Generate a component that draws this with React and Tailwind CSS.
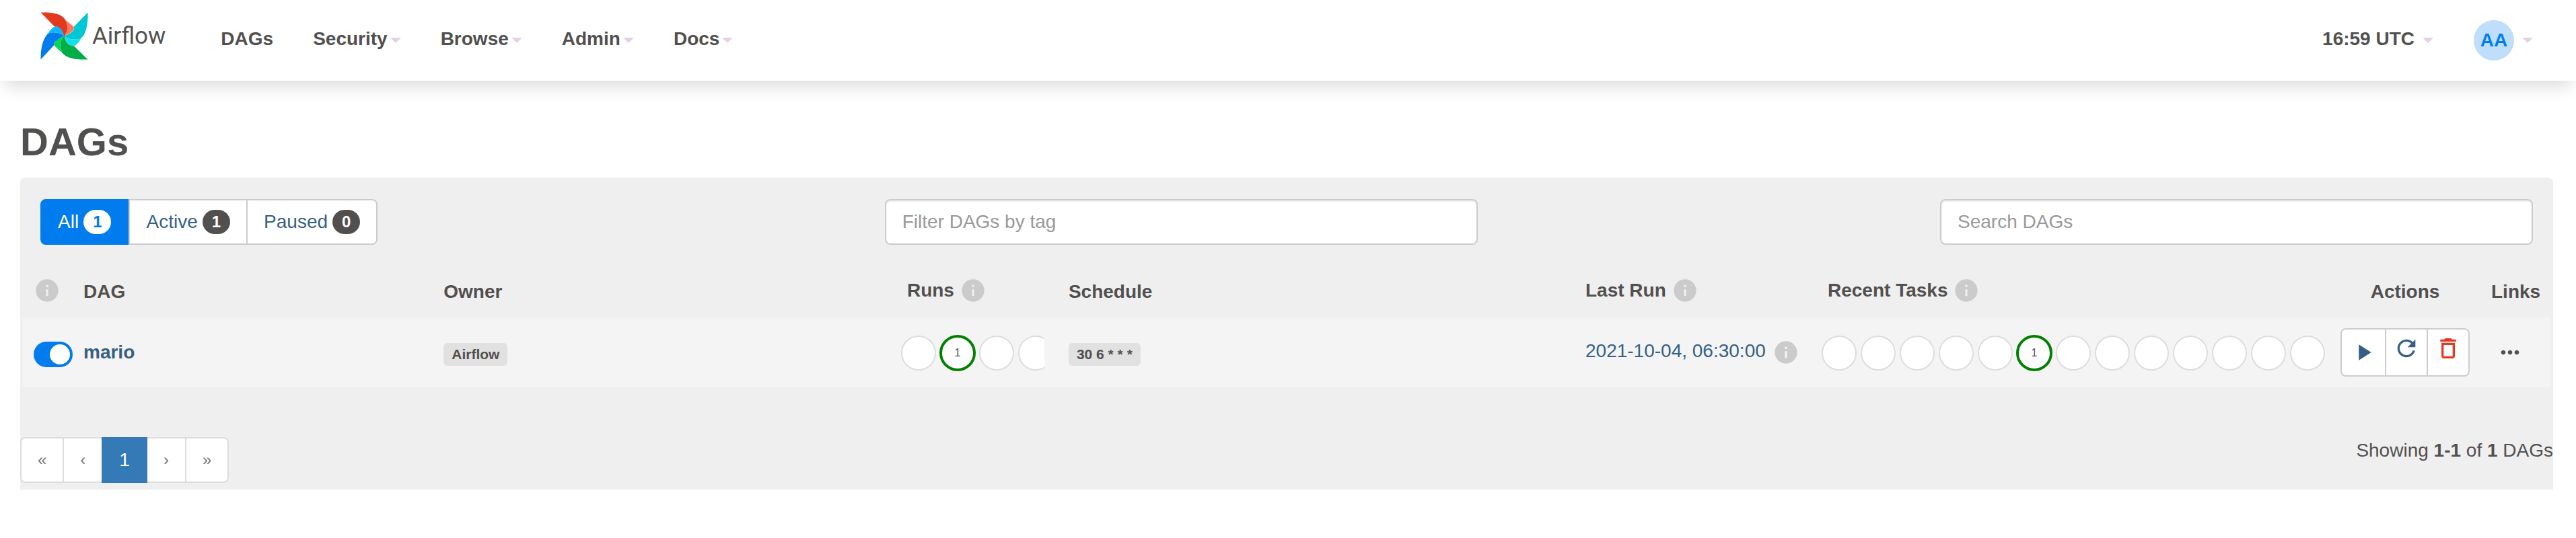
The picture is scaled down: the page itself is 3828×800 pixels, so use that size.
import { MdInfo, MdPlayArrow, MdRefresh, MdDeleteOutline, MdMoreHoriz } from 'react-icons/md';

const NAV = [
  { label: 'DAGs', menu: false },
  { label: 'Security', menu: true },
  { label: 'Browse', menu: true },
  { label: 'Admin', menu: true },
  { label: 'Docs', menu: true },
];

function Caret() {
  return (
    <span
      aria-hidden="true"
      className="mt-1 h-0 w-0 border-x-8 border-t-8 border-x-transparent border-t-[#e2d2e2]"
    />
  );
}

function Pinwheel() {
  return (
    <svg viewBox="0 0 71 71" className="h-[71px] w-[71px]" aria-hidden="true">
      <path d="M35.5 35.5C29 30 19 29 11 32C3 41 0.500 54 0.500 70.500L20.500 49C20 44 28 39 35.500 35.500Z" fill="#017cee" />
      <path d="M35.500 35.500C34 26 28 20.500 22 21C18 23 14 27 11 32C19 29 29 30 35.500 35.500Z" fill="#0cb6ff" />
      <path d="M35.500 35.500C33 26 28 20.500 20.500 21L0.500 0.500C17 0 32 2 37 11.500C42 20 41 29 35.500 35.500Z" fill="#e43921" />
      <path d="M35.500 35.500C41 29 42 20 37 11.500L50 22C50 28 42 33 35.500 35.500Z" fill="#ff7557" />
      <path d="M35.500 35.500C43 33 51 28 50 21.500L70.500 0.500C71 17 68 33 60.500 39C52 42 42 41 35.500 35.500Z" fill="#00c7d4" />
      <path d="M35.500 35.500C42 41 52 42 60.500 39C58 44 54 49 50 50.500C43 51 37 43 35.500 35.500Z" fill="#11e1ee" />
      <path d="M35.500 35.500C37 45 43 50.500 50 50.500L70.500 70.500C54 71 38 69 32 60C28 51 29 41 35.500 35.500Z" fill="#00ad46" />
      <path d="M35.500 35.500C29 41 28 51 32 60C28 57 24 53 20.500 49.500C20.500 44 28 38 35.500 35.500Z" fill="#04d659" />
      <circle cx="35.500" cy="35.500" r="1" fill="#51504f" />
    </svg>
  );
}

function Info({ label }) {
  return <MdInfo role="img" aria-label={label} className="h-10 w-10 shrink-0 text-[#cbcbcb]" />;
}

function InfoHeader({ children, info }) {
  return (
    <div className="flex h-11 items-center gap-2">
      {children}
      <Info label={info} />
    </div>
  );
}

function StatusCircles({ count, active }) {
  return (
    <div className="mt-0.5 flex overflow-hidden">
      {Array.from({ length: count }, (_, i) => (
        <div key={i} className="flex h-[54px] w-[58px] shrink-0 items-center justify-center">
          {i === active ? (
            <a
              href="#tasks"
              className="flex h-[54px] w-[54px] items-center justify-center rounded-full border-4 border-[#008000] bg-white text-base"
            >
              1
            </a>
          ) : (
            <span className="h-[52px] w-[52px] rounded-full border-2 border-[#ddd] bg-white" />
          )}
        </div>
      ))}
    </div>
  );
}

function Tag({ children }) {
  return (
    <a
      href="#tag"
      className="mt-1.5 block w-fit rounded-md bg-[#e1e1e1] px-3 text-[21px] leading-[34px] font-bold whitespace-nowrap"
    >
      {children}
    </a>
  );
}

function Filter({ label, count, active, className = '' }) {
  const tone = active ? 'border-[#017cee] bg-[#017cee] text-white' : 'border-[#ccc] bg-white text-[#355f85]';
  const badge = active ? 'bg-white text-[#017cee]' : 'bg-[#51504f] text-white';
  return (
    <a href="#filter" className={`flex h-[68px] items-center gap-[7px] border-2 px-6 ${tone} ${className}`}>
      {label}
      <span className={`rounded-[18px] px-3.5 text-2xl leading-9 font-bold ${badge}`}>{count}</span>
    </a>
  );
}

const FIELD =
  'h-[68px] w-full rounded-lg border-2 border-[#ccc] bg-white px-6 shadow-[inset_0_2px_2px_rgba(0,0,0,0.075)] placeholder:text-[#999]';

export default function App() {
  return (
    <div className="bg-white font-['Liberation_Sans',Arial,sans-serif] text-[28px] leading-10 text-[#51504f]">
      <header className="flex h-[120px] items-center justify-between bg-white pr-16 pl-[60px] shadow-[0_16px_24px_-8px_rgba(0,0,0,0.15)]">
        <div className="flex items-center">
          <a href="#home" className="flex items-center gap-1.5 pb-[13px]">
            <Pinwheel />
            <span className="font-['Roboto',sans-serif] text-[35px]">Airflow</span>
          </a>
          <nav className="ml-[82px] flex items-center gap-[59px] pb-1 font-bold">
            {NAV.map((item) => (
              <a key={item.label} href="#nav" className="flex items-center gap-1">
                {item.label}
                {item.menu && <Caret />}
              </a>
            ))}
          </nav>
        </div>
        <div className="flex items-center gap-[60px] font-bold">
          <button type="button" className="flex items-center gap-3 pb-1">
            16:59 UTC
            <Caret />
          </button>
          <button type="button" className="flex items-center gap-3">
            <span className="flex h-[60px] w-[60px] items-center justify-center rounded-full bg-[#bfdefb] text-[#017cee]">
              AA
            </span>
            <span
              aria-hidden="true"
              className="h-0 w-0 border-x-8 border-t-8 border-x-transparent border-t-[#e2d2e2]"
            />
          </button>
        </div>
      </header>

      <main className="pt-[58px] pr-[34px] pl-[30px]">
        <h1 className="mb-5 text-[58px] leading-[66px] font-bold">DAGs</h1>

        <section className="rounded-t-lg bg-[#efefef] pb-2.5">
          <div className="grid grid-cols-12 py-8">
            <div className="col-span-4 flex px-[30px]">
              <Filter label="All" count={1} active className="rounded-l-lg" />
              <Filter label="Active" count={1} />
              <Filter label="Paused" count={0} className="rounded-r-lg border-l-0" />
            </div>
            <div className="col-span-3 px-[30px]">
              <input type="text" aria-label="Filter DAGs by tag" placeholder="Filter DAGs by tag" className={FIELD} />
            </div>
            <div className="col-span-3 col-start-10 px-[30px]">
              <input type="search" aria-label="Search DAGs" placeholder="Search DAGs" className={FIELD} />
            </div>
          </div>

          <div className="px-1">
            <table className="w-full table-fixed text-left">
              <colgroup>
                <col className="w-[74px]" />
                <col className="w-[14.25%]" />
                <col />
                <col className="w-[252px]" />
                <col className="w-[20.45%]" />
                <col className="w-[348px]" />
                <col className="w-[774px]" />
                <col className="w-[224px]" />
                <col className="w-[104px]" />
              </colgroup>
              <thead>
                <tr className="align-bottom [&>th]:px-4 [&>th]:pt-3.5 [&>th]:pb-[18px]">
                  <th>
                    <div className="flex h-11 items-center">
                      <Info label="Pause or unpause a DAG" />
                    </div>
                  </th>
                  <th>DAG</th>
                  <th>Owner</th>
                  <th>
                    <div className="pl-3">
                      <InfoHeader info="Status of all DAG runs">Runs</InfoHeader>
                    </div>
                  </th>
                  <th>Schedule</th>
                  <th>
                    <InfoHeader info="Date of the latest run">Last Run</InfoHeader>
                  </th>
                  <th>
                    <div className="pl-3">
                      <InfoHeader info="Status of recent tasks">Recent Tasks</InfoHeader>
                    </div>
                  </th>
                  <th className="text-center">Actions</th>
                  <th>Links</th>
                </tr>
              </thead>
              <tbody>
                <tr className="h-[104px] bg-[#f4f4f4] align-middle [&>td]:pl-4">
                  <td>
                    <label className="relative mt-1.5 block h-[38px] w-[58px]">
                      <input
                        type="checkbox"
                        defaultChecked
                        aria-label="Toggle mario"
                        className="peer block h-[38px] w-[58px] appearance-none rounded-full bg-[#ccc] checked:bg-[#017cee]"
                      />
                      <span className="absolute top-1 left-1 h-[30px] w-[30px] rounded-full bg-white peer-checked:left-6" />
                    </label>
                  </td>
                  <td>
                    <a href="#mario" className="font-bold text-[#355f85]">
                      mario
                    </a>
                  </td>
                  <td>
                    <Tag>Airflow</Tag>
                  </td>
                  <td className="pr-5">
                    <StatusCircles count={4} active={1} />
                  </td>
                  <td>
                    <Tag>30 6 * * *</Tag>
                  </td>
                  <td>
                    <div className="flex items-center gap-2.5">
                      <a href="#run" className="pb-1 whitespace-nowrap text-[#355f85]">
                        2021-10-04, 06:30:00
                      </a>
                      <Info label="Run details" />
                    </div>
                  </td>
                  <td>
                    <StatusCircles count={13} active={5} />
                  </td>
                  <td className="pr-4">
                    <div className="flex h-[72px] divide-x-2 divide-[#ccc] rounded-lg border-2 border-[#ccc] bg-white text-[#355f85]">
                      <button type="button" aria-label="Trigger DAG" className="flex w-[66px] items-center justify-center">
                        <MdPlayArrow className="h-10 w-10" />
                      </button>
                      <button type="button" aria-label="Refresh DAG" className="flex flex-1 justify-center pt-2">
                        <MdRefresh className="h-10 w-10" />
                      </button>
                      <button type="button" aria-label="Delete DAG" className="flex flex-1 justify-center pt-2 text-[#e43921]">
                        <MdDeleteOutline className="h-10 w-10" />
                      </button>
                    </div>
                  </td>
                  <td>
                    <button type="button" aria-label="More links" className="block pl-2">
                      <MdMoreHoriz className="h-10 w-10" />
                    </button>
                  </td>
                </tr>
              </tbody>
            </table>
          </div>

          <div className="mt-[74px] flex items-start justify-between">
            <nav
              aria-label="Pages"
              className="flex h-[68px] text-[#777] [&>a]:flex [&>a]:items-center [&>a]:border-[#ddd] [&>a]:bg-white [&>a]:px-6 [&>a]:text-2xl"
            >
              <a href="#first" className="rounded-l-lg border-2">«</a>
              <a href="#prev" className="border-y-2">‹</a>
              <span className="flex items-center bg-[#337ab7] px-[26px] text-white">1</span>
              <a href="#next" className="border-y-2">›</a>
              <a href="#last" className="rounded-r-lg border-2">»</a>
            </nav>
            <p>
              Showing <strong>1-1</strong> of <strong>1</strong> DAGs
            </p>
          </div>
        </section>
      </main>
    </div>
  );
}
